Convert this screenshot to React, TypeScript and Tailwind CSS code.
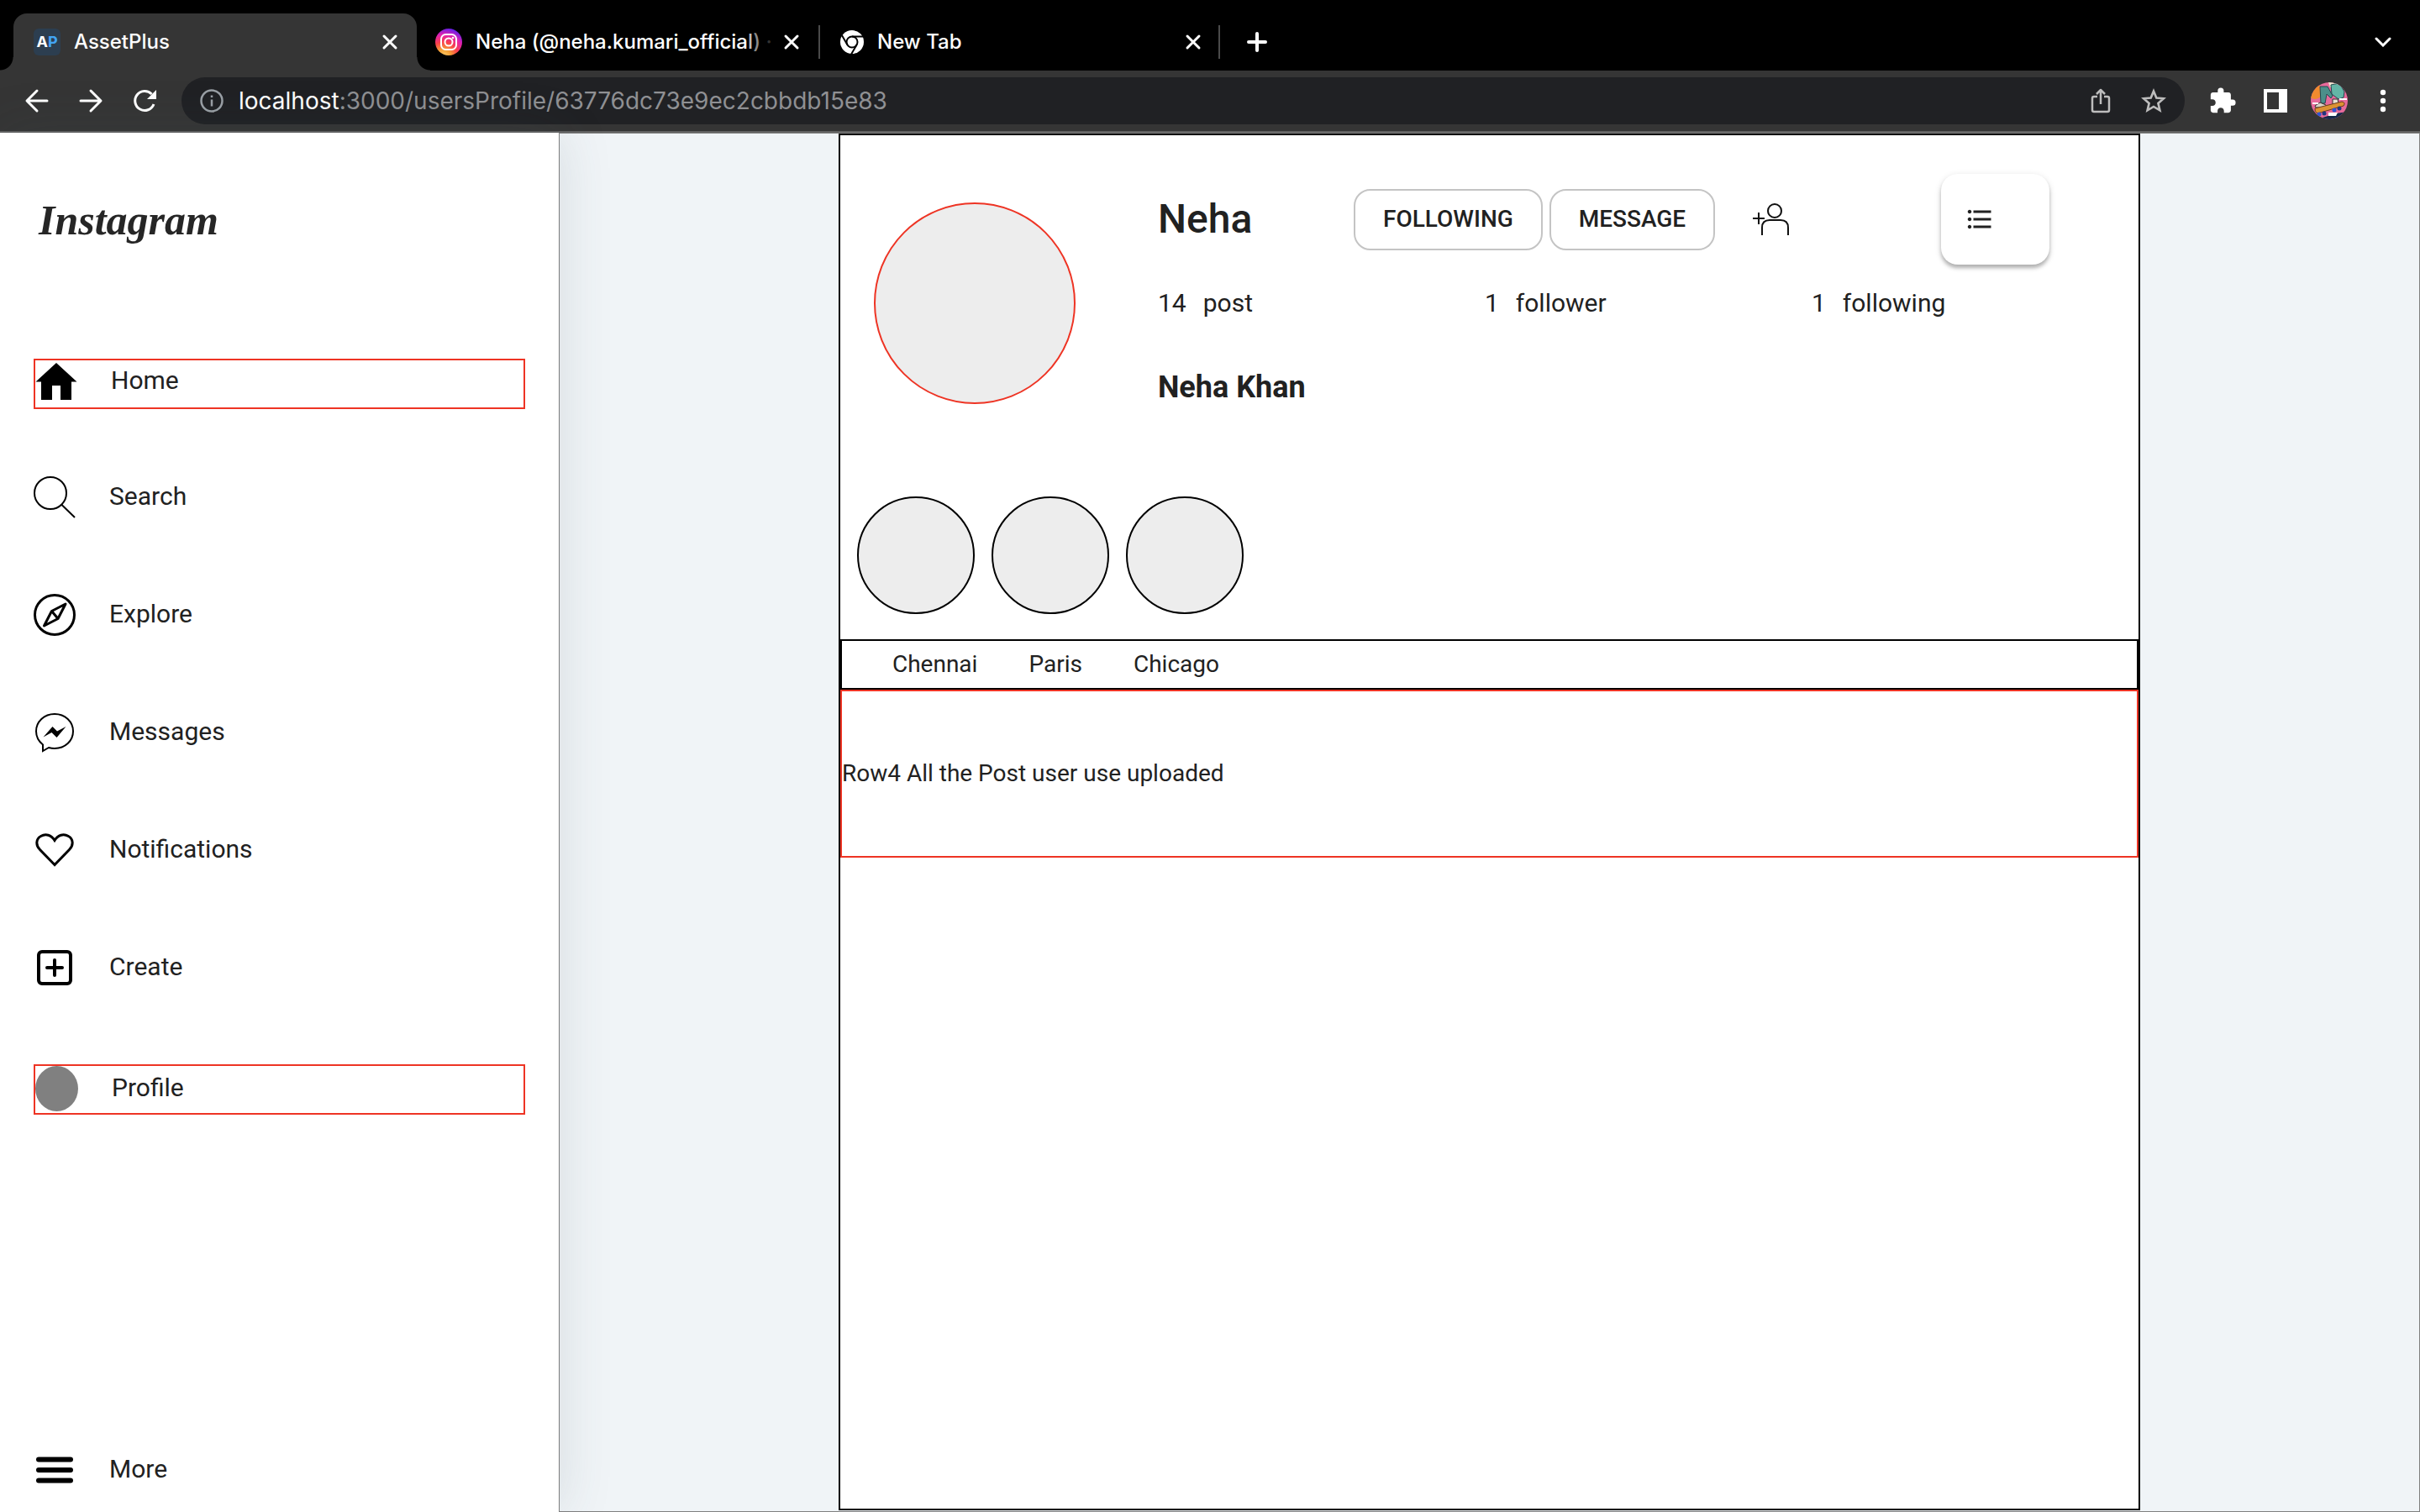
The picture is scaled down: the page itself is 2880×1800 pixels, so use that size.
import React from "react";
import { MdExtension, MdFormatListBulleted } from "react-icons/md";

type NavItem = { label: string; icon: React.ReactNode; boxed?: boolean };

const HomeIcon = () => (
  <svg viewBox="0 0 50 50" className="size-[50px] shrink-0" aria-hidden="true">
    <path d="M25 3 0.5 25.500H7V47H20V30H30V47H43V25.500H49.500Z" fill="#000" />
  </svg>
);

const SearchIcon = () => (
  <svg viewBox="0 0 50 50" className="size-[50px] shrink-0" fill="none" stroke="#000" strokeWidth="2" aria-hidden="true">
    <circle cx="20" cy="20" r="19" />
    <path d="m33 33.500 16 15.500" />
  </svg>
);

const ExploreIcon = () => (
  <svg viewBox="0 0 50 50" className="size-[50px] shrink-0" fill="none" stroke="#000" strokeWidth="3" aria-hidden="true">
    <circle cx="25" cy="25" r="23.500" />
    <path d="M38 12 21.500 20.500 12.500 38 29 29.500ZM21.500 20.500 29 29.500" strokeLinejoin="round" />
  </svg>
);

const MessengerIcon = () => (
  <svg viewBox="0 0 50 50" className="size-[50px] shrink-0" aria-hidden="true">
    <path d="M25 3C12.500 3 3 12 3 23.500C3 30 6 35.500 11 39.500V47L18 43C20 43.600 22.500 44 25 44C37.500 44 47 35 47 23.500C47 12 37.500 3 25 3Z" fill="none" stroke="#000" strokeWidth="2" />
    <path d="M11.500 30.500 22.500 18 28 23.500 38.500 18 27.500 31 21.500 25Z" fill="#000" />
  </svg>
);

const HeartIcon = () => (
  <svg viewBox="0 0 50 50" className="size-[50px] shrink-0" aria-hidden="true">
    <path d="M25 42.500 7.500 24.500C2 19 3 11.500 8.500 8.500C14.500 5 21 7 25 13.500C29 7 35.500 5 41.500 8.500C47 11.500 48 19 42.500 24.500Z" fill="none" stroke="#000" strokeWidth="3" />
  </svg>
);

const CreateIcon = () => (
  <svg viewBox="0 0 50 50" className="size-[50px] shrink-0" fill="none" stroke="#000" strokeWidth="4" aria-hidden="true">
    <rect x="6" y="6" width="38" height="38" rx="4" />
    <path d="M25 16V34M16 25H34" strokeLinecap="round" />
  </svg>
);

const MoreIcon = () => (
  <svg viewBox="0 0 50 50" className="size-[50px] shrink-0" stroke="#000" strokeWidth="6" strokeLinecap="round" aria-hidden="true">
    <path d="M6 12.500H44M6 25H44M6 37.500H44" />
  </svg>
);

const CloseIcon = () => (
  <svg viewBox="0 0 20 20" className="size-5" stroke="#fff" strokeWidth="3" strokeLinecap="round" aria-hidden="true">
    <path d="M3 3 17 17M17 3 3 17" />
  </svg>
);

const InstagramFavicon = () => (
  <svg viewBox="0 0 32 32" className="size-8 shrink-0" aria-hidden="true">
    <defs>
      <radialGradient id="ig" cx="0.3" cy="1.05" r="1.1">
        <stop offset="0" stopColor="#fed373" />
        <stop offset="0.250" stopColor="#f5a034" />
        <stop offset="0.500" stopColor="#fa3f4c" />
        <stop offset="0.750" stopColor="#e020b0" />
        <stop offset="1" stopColor="#5a20f0" />
      </radialGradient>
    </defs>
    <circle cx="16" cy="16" r="16" fill="url(#ig)" />
    <g fill="none" stroke="#fff" strokeWidth="2">
      <rect x="7" y="7" width="18" height="18" rx="5.500" />
      <circle cx="16" cy="16" r="4.500" />
    </g>
    <circle cx="21" cy="11" r="1.300" fill="#fff" />
  </svg>
);

const ChromeFavicon = () => (
  <svg viewBox="0 0 28 28" className="size-7 shrink-0" aria-hidden="true">
    <circle cx="14" cy="14" r="14" fill="#fff" />
    <g stroke="#000" strokeWidth="2" fill="none">
      <path d="M14 7.500H27.500" />
      <path d="M8.400 17.200 1.600 5.500" />
      <path d="M19.600 17.200 12.800 29" />
      <circle cx="14" cy="14" r="6.500" />
    </g>
  </svg>
);

const ProfilePicture = () => (
  <svg viewBox="0 0 44 44" className="size-11" aria-hidden="true">
    <defs>
      <clipPath id="pp"><circle cx="22" cy="22" r="22" /></clipPath>
    </defs>
    <g clipPath="url(#pp)">
      <rect width="44" height="44" fill="#e76a9b" />
      <circle cx="5" cy="11" r="9" fill="#f28a2e" />
      <path d="M21 0H33V5L23 6Z" fill="#efe6cf" />
      <path d="M11 5 20 5 26 16 24 19 19 14 17 25 12 25Z" fill="#4c8f8a" stroke="#23494f" />
      <path d="M24 3 34 1 40 11 39 18 33 20 25 14Z" fill="#63b5a6" stroke="#23494f" />
      <path d="M5 28 11 24 18 27V30H6Z" fill="#d9d3c6" stroke="#333" />
      <path d="M26 20 32 20 33 25 26 26Z" fill="#e9e2d3" stroke="#333" />
      <path d="M2 24H9V26H2ZM34 19H43V21H34Z" fill="#fff" />
      <path d="M5 31 37 23Q42 24 39 28L8 37Q4 35 5 31Z" fill="#dc9233" stroke="#6b3a1e" />
      <path d="M0 40 14 42 30 37 44 35V44H0Z" fill="#152a4b" />
      <path d="M21 36H32L30 40H21Z" fill="#fff" />
      <circle cx="10" cy="38" r="2.500" fill="#2f55d4" />
      <circle cx="16" cy="37" r="2.500" fill="#22357f" />
      <circle cx="28" cy="33" r="2.500" fill="#2f55d4" />
      <circle cx="34" cy="31" r="2.500" fill="#22357f" />
    </g>
  </svg>
);

const AddPersonIcon = () => (
  <svg viewBox="0 0 44 40" className="h-10 w-11" fill="none" stroke="#111" strokeWidth="2" aria-hidden="true">
    <circle cx="26" cy="10" r="8" />
    <path d="M11 39V30Q11 21 20 21H33Q42 21 42 30V39" />
    <path d="M7 12V26M0 19H14" />
  </svg>
);

const nav: NavItem[] = [
  { label: "Home", icon: <HomeIcon />, boxed: true },
  { label: "Search", icon: <SearchIcon /> },
  { label: "Explore", icon: <ExploreIcon /> },
  { label: "Messages", icon: <MessengerIcon /> },
  { label: "Notifications", icon: <HeartIcon /> },
  { label: "Create", icon: <CreateIcon /> },
  { label: "Profile", icon: <span className="h-[54px] w-[51px] shrink-0 rounded-[50%] bg-[#808080]" />, boxed: true },
];

const stats = [
  { count: 14, label: "post" },
  { count: 1, label: "follower" },
  { count: 1, label: "following" },
];

const places = ["Chennai", "Paris", "Chicago"];

function NavLink({ item }: { item: NavItem }) {
  return (
    <a
      href="#"
      className={
        item.boxed
          ? "flex h-[60px] items-start border-2 border-[#ee3424]"
          : "flex h-[60px] items-start"
      }
    >
      <span className="flex items-center gap-10 leading-[44px]">
        {item.icon}
        <span className="pb-0.5">{item.label}</span>
      </span>
    </a>
  );
}

function BrowserTabs() {
  return (
    <div className="flex h-[84px] items-end bg-black pl-4 text-2xl font-medium">
      <div className="relative flex h-[68px] w-[480px] items-center rounded-t-2xl bg-[#353535] pr-[22px] pl-6">
        <span className="absolute bottom-0 -left-4 size-4 bg-[radial-gradient(circle_at_0_0,#000_15px,#353535_16px)]" />
        <span className="absolute -right-4 bottom-0 size-4 bg-[radial-gradient(circle_at_100%_0,#000_15px,#353535_16px)]" />
        <span className="mr-4 flex size-8 items-center justify-center rounded-md bg-[#2c3e50] text-lg font-bold">
          A<span className="text-[#42a5f5]">P</span>
        </span>
        <span className="flex-1">AssetPlus</span>
        <button type="button" aria-label="Close AssetPlus"><CloseIcon /></button>
      </div>
      <div className="flex h-[68px] w-[478px] items-center pr-[22px] pl-[22px]">
        <InstagramFavicon />
        <span className="ml-4 flex-1 whitespace-nowrap">
          Neha (@neha.kumari_officia<span className="text-[#bdbdbd]">l</span><span className="text-[#8a8a8a]">)</span> <span className="text-[#333]">·</span>
        </span>
        <button type="button" aria-label="Close Instagram"><CloseIcon /></button>
      </div>
      <div className="flex h-[68px] w-[478px] items-center">
        <span className="h-10 w-0.5 bg-[#4a4a4a]" />
        <span className="ml-6"><ChromeFavicon /></span>
        <span className="ml-4 flex-1">New Tab</span>
        <button type="button" aria-label="Close New Tab" className="mr-[20px]"><CloseIcon /></button>
        <span className="h-10 w-0.5 bg-[#4a4a4a]" />
      </div>
      <button type="button" aria-label="New tab" className="ml-8 flex h-[68px] items-center">
        <svg viewBox="0 0 24 24" className="size-6" stroke="#fff" strokeWidth="4" strokeLinecap="round" aria-hidden="true">
          <path d="M12 2V22M2 12H22" />
        </svg>
      </button>
      <button type="button" aria-label="Search tabs" className="mr-[34px] ml-auto flex h-[68px] items-center">
        <svg viewBox="0 0 20 12" className="h-3 w-5" fill="none" stroke="#fff" strokeWidth="3" strokeLinecap="round" aria-hidden="true">
          <path d="m2 2 8 8 8-8" />
        </svg>
      </button>
    </div>
  );
}

function Toolbar() {
  return (
    <div className="flex h-[74px] items-center border-b-2 border-[#626262] bg-[#353535] pr-10 pl-7">
      <div className="flex items-center gap-8">
        <button type="button" aria-label="Back">
          <svg viewBox="0 0 32 32" className="size-8" fill="none" stroke="#fff" strokeWidth="3" strokeLinecap="round" strokeLinejoin="round" aria-hidden="true">
            <path d="M28 16H5M16 4 4 16 16 28" />
          </svg>
        </button>
        <button type="button" aria-label="Forward">
          <svg viewBox="0 0 32 32" className="size-8" fill="none" stroke="#fff" strokeWidth="3" strokeLinecap="round" strokeLinejoin="round" aria-hidden="true">
            <path d="M4 16H27M16 4 28 16 16 28" />
          </svg>
        </button>
        <button type="button" aria-label="Reload">
          <svg viewBox="0 0 32 32" className="size-8" fill="none" aria-hidden="true">
            <path d="M27 20A11.500 11.500 0 1 1 24.500 8" stroke="#fff" strokeWidth="3" />
            <path d="M30 3V14H19Z" fill="#fff" />
          </svg>
        </button>
      </div>
      <div className="ml-7 flex h-14 flex-1 items-center rounded-full bg-[#202124] pr-[22px] pl-[22px]">
        <svg viewBox="0 0 28 28" className="size-7 shrink-0" fill="none" stroke="#9aa0a6" strokeWidth="2.500" aria-hidden="true">
          <circle cx="14" cy="14" r="12.500" />
          <path d="M14 12.500V20.500M14 7.500V10" />
        </svg>
        <a href="#" className="ml-[18px] flex-1 text-[28px] text-[#8f9093]">
          <span className="text-white">localhost</span>:3000/usersProfile/63776dc73e9ec2cbbdb15e83
        </a>
        <button type="button" aria-label="Share" className="mr-9">
          <svg viewBox="0 0 24 30" className="h-[30px] w-6" fill="none" stroke="#bdbdbd" strokeWidth="2.500" strokeLinejoin="round" aria-hidden="true">
            <path d="M8 10H4Q2 10 2 12V26Q2 28 4 28H20Q22 28 22 26V12Q22 10 20 10H16M12 19V3M7 7 12 2 17 7" />
          </svg>
        </button>
        <button type="button" aria-label="Bookmark">
          <svg viewBox="0 0 30 30" className="size-[30px]" fill="none" stroke="#bdbdbd" strokeWidth="2.600" aria-hidden="true">
            <path d="m15 3.500 3.300 8 8.700 0.700-6.600 5.700 2 8.500-7.400-4.500-7.400 4.500 2-8.500-6.600-5.700 8.700-0.700Z" />
          </svg>
        </button>
      </div>
      <div className="ml-7 flex items-center">
        <button type="button" aria-label="Extensions"><MdExtension className="size-[34px] text-white" /></button>
        <button type="button" aria-label="Side panel" className="ml-8">
          <svg viewBox="0 0 28 28" className="size-7" aria-hidden="true">
            <path d="M0 0H28V28H0ZM4 4V24H18V4Z" fill="#fff" fillRule="evenodd" />
          </svg>
        </button>
        <button type="button" aria-label="Profile" className="ml-7"><ProfilePicture /></button>
        <button type="button" aria-label="Menu" className="ml-[38px]">
          <svg viewBox="0 0 8 28" className="h-7 w-2" fill="#fff" aria-hidden="true">
            <circle cx="4" cy="4" r="3.200" />
            <circle cx="4" cy="14" r="3.200" />
            <circle cx="4" cy="24" r="3.200" />
          </svg>
        </button>
      </div>
    </div>
  );
}

function Sidebar() {
  return (
    <aside className="z-10 flex w-[665px] shrink-0 flex-col bg-white px-10 pt-[72px] pb-[15px] text-[30px] shadow-[0_0_60px_rgba(60,80,90,0.15)]">
      <a href="#" className="mb-[132px] pl-1.5 font-['Liberation_Serif',serif] text-[50px] leading-[65px] font-bold text-[#262626] italic">
        Instagram
      </a>
      <nav className="flex flex-1 flex-col gap-20">
        {nav.map((item) => (
          <NavLink key={item.label} item={item} />
        ))}
        <div className="mt-auto">
          <NavLink item={{ label: "More", icon: <MoreIcon /> }} />
        </div>
      </nav>
    </aside>
  );
}

function Profile() {
  return (
    <section className="w-[70%] border-2 border-black bg-white">
      <header className="flex items-start pl-10">
        <div className="mt-20 size-60 shrink-0 rounded-full border-2 border-[#ee3424] bg-[#ededed]" />
        <div className="ml-[98px] flex-1 pt-[46px]">
          <div className="flex h-[108px] items-center">
            <h1 className="w-[233px] text-5xl font-medium">Neha</h1>
            <div className="flex gap-2 text-[28px] font-medium">
              <button type="button" className="h-[73px] w-[225px] rounded-[20px] border-2 border-[#c4c4c4]">FOLLOWING</button>
              <button type="button" className="h-[73px] w-[197px] rounded-[20px] border-2 border-[#c4c4c4]">MESSAGE</button>
            </div>
            <button type="button" aria-label="Suggest people" className="ml-[45px]"><AddPersonIcon /></button>
            <button type="button" aria-label="Options" className="mr-[106px] ml-auto flex h-[108px] w-[129px] items-center rounded-[20px] pl-7 shadow-[0_4px_4px_rgba(0,0,0,0.25),0_2px_8px_rgba(0,0,0,0.12)]">
              <MdFormatListBulleted className="size-9" />
            </button>
          </div>
          <dl className="mt-6 flex text-[30px] leading-[44px]">
            {stats.map((s) => (
              <div key={s.label} className="flex w-[389px] gap-5">
                <dt>{s.count}</dt>
                <dd>{s.label}</dd>
              </div>
            ))}
          </dl>
          <h2 className="mt-14 text-4xl leading-[44px] font-bold">Neha Khan</h2>
        </div>
      </header>
      <div className="mt-[108px] flex gap-5 pl-5">
        {places.map((p) => (
          <div key={p} className="size-[140px] rounded-full border-2 border-black bg-[#ededed]" />
        ))}
      </div>
      <div className="mt-[30px] flex h-[60px] items-center gap-[61px] border-2 border-black pl-[60px] text-[28px]">
        {places.map((p) => (
          <span key={p}>{p}</span>
        ))}
      </div>
      <div className="flex h-[200px] items-center border-2 border-[#ee3424] text-[28px]">
        Row4 All the Post user use uploaded
      </div>
    </section>
  );
}

export default function App() {
  return (
    <div className="flex min-h-screen flex-col font-['Roboto',sans-serif] text-[#212121]">
      <header className="font-['Inter',sans-serif] text-white">
        <BrowserTabs />
        <Toolbar />
      </header>
      <div className="flex flex-1">
        <Sidebar />
        <main className="flex flex-1 justify-center border border-[#808080] bg-[#f0f4f7] pb-px">
          <Profile />
        </main>
      </div>
    </div>
  );
}
